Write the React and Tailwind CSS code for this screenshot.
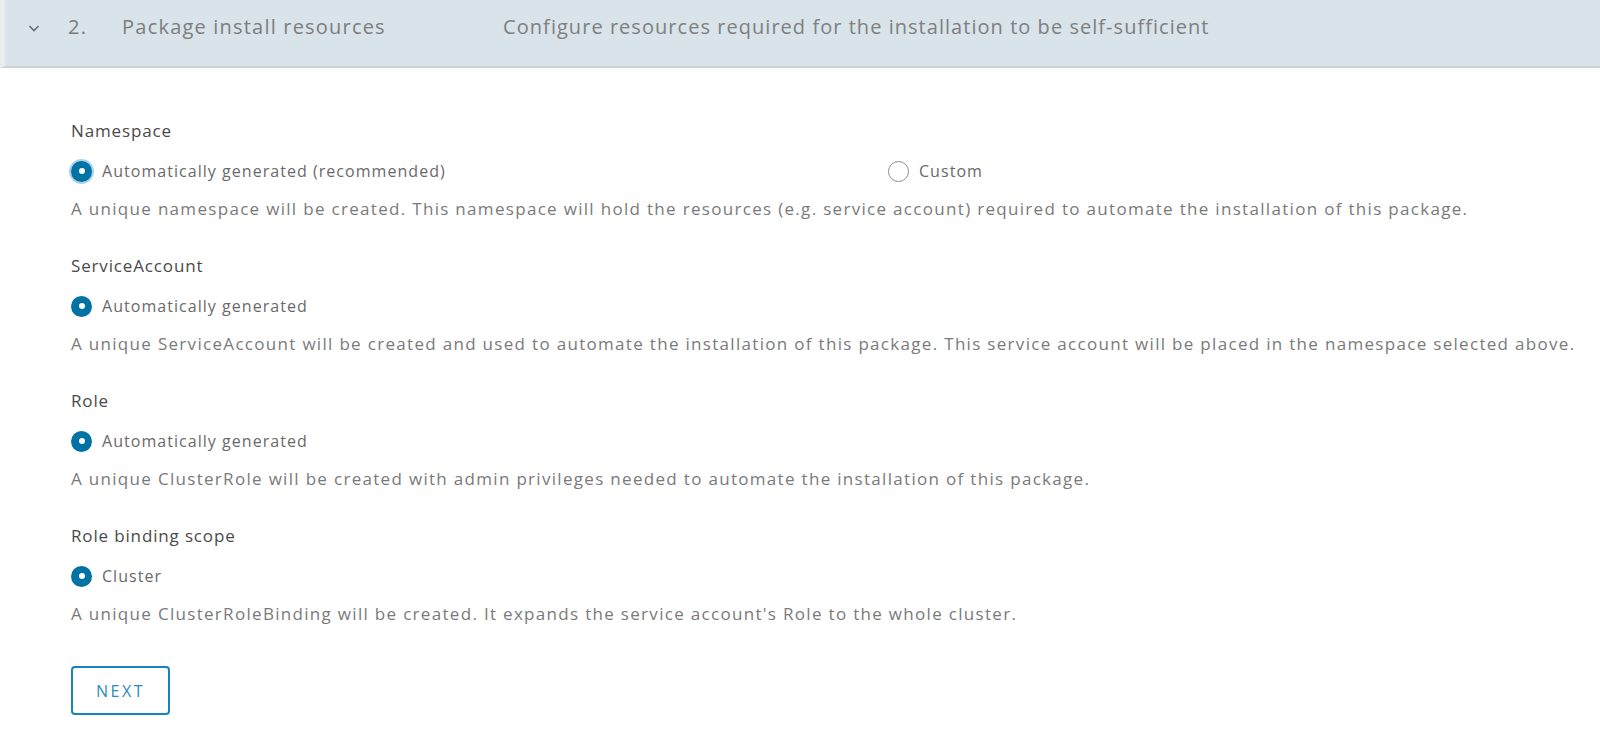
import React, { useState } from 'react';

const font = { fontFamily: '"Open Sans", "Noto Sans", sans-serif' };

function Radio({ checked, focused, label, onClick }) {
  return (
    <button type="button" onClick={onClick} className="flex items-center gap-[10px] h-6 text-left">
      {checked ? (
        <span className={`relative flex items-center justify-center w-[21px] h-[21px] rounded-full bg-[#0072a3] ${focused ? 'ring-2 ring-[#6fb7e0]/60' : ''}`}>
          <span className="w-[6px] h-[6px] rounded-full bg-white" />
        </span>
      ) : (
        <span className="w-[21px] h-[21px] rounded-full border border-[#8c8c8c] bg-white" />
      )}
      <span className="text-[16px] text-[#6a6a6a] tracking-[0.065em]">{label}</span>
    </button>
  );
}

function Section({ title, children, desc }) {
  return (
    <div className="flex flex-col">
      <div className="h-6 flex items-center text-[17px] text-[#4a4a4a] tracking-[0.05em]">{title}</div>
      <div className="mt-[16px] h-6 flex items-center">{children}</div>
      <div className="mt-[14px] h-6 flex items-center text-[17px] text-[#7a7a7a] tracking-[0.077em] whitespace-nowrap">{desc}</div>
    </div>
  );
}

export default function App() {
  const [ns, setNs] = useState('auto');

  return (
    <div className="w-[1600px] h-[750px] bg-white overflow-hidden" style={font}>
      <div className="h-[68px] pb-[12px] flex items-center bg-[#d8e3ea] border-l-[5px] border-l-[#e9edf0] border-b-2 border-b-[#cdd3d7]">
        <svg width="14" height="14" viewBox="0 0 14 14" className="ml-[22px] mt-[2px]">
          <path d="M2.5 5 L7 9.5 L11.5 5" fill="none" stroke="#6b6b6b" strokeWidth="1.6" />
        </svg>
        <span className="ml-[27px] text-[20px] text-[#7b7b7b] tracking-[0.06em]">2.</span>
        <span className="ml-[35px] text-[20px] text-[#7d7d7d] tracking-[0.06em] w-[381px]">Package install resources</span>
        <span className="text-[20px] text-[#808080] tracking-[0.052em]">Configure resources required for the installation to be self-sufficient</span>
      </div>

      <div className="pl-[71px] pt-[51px] flex flex-col gap-[33px]">
        <Section
          title="Namespace"
          desc="A unique namespace will be created. This namespace will hold the resources (e.g. service account) required to automate the installation of this package."
        >
          <div className="w-[817px]">
            <Radio checked={ns === 'auto'} focused label="Automatically generated (recommended)" onClick={() => setNs('auto')} />
          </div>
          <Radio checked={ns === 'custom'} label="Custom" onClick={() => setNs('custom')} />
        </Section>

        <Section
          title="ServiceAccount"
          desc="A unique ServiceAccount will be created and used to automate the installation of this package. This service account will be placed in the namespace selected above."
        >
          <Radio checked label="Automatically generated" />
        </Section>

        <Section
          title="Role"
          desc="A unique ClusterRole will be created with admin privileges needed to automate the installation of this package."
        >
          <Radio checked label="Automatically generated" />
        </Section>

        <Section
          title="Role binding scope"
          desc="A unique ClusterRoleBinding will be created. It expands the service account's Role to the whole cluster."
        >
          <Radio checked label="Cluster" />
        </Section>

        <div className="mt-[7px]">
          <button className="w-[99px] h-[49px] rounded-[4px] border-2 border-[#1a82bd] text-[#2a8cc4] text-[16px] font-medium tracking-[0.16em]">
            NEXT
          </button>
        </div>
      </div>
    </div>
  );
}
